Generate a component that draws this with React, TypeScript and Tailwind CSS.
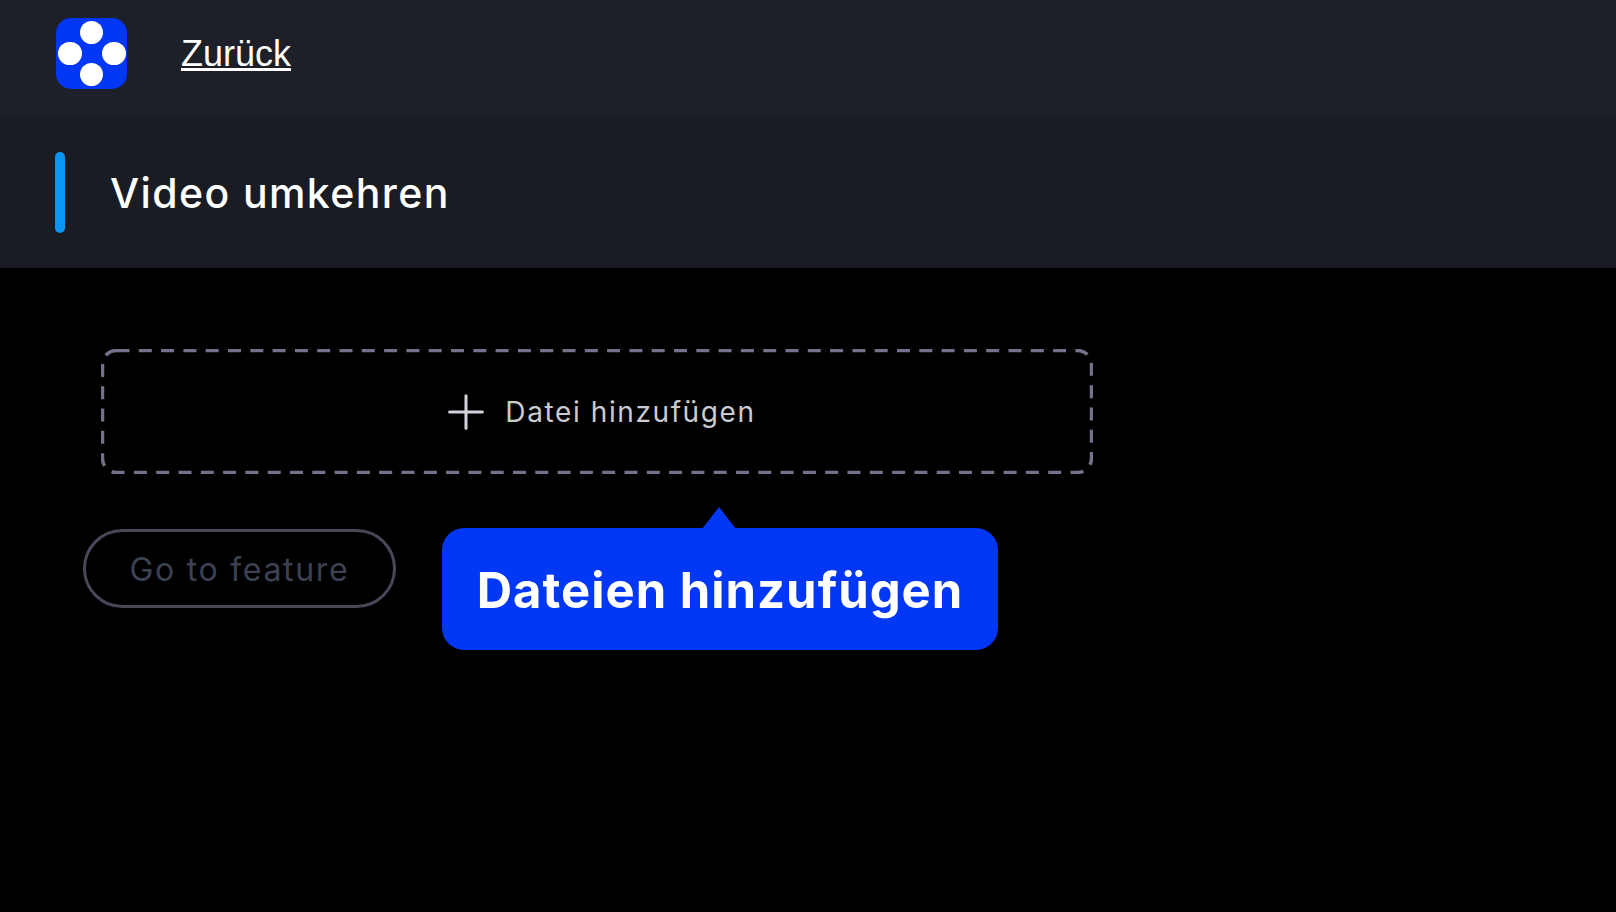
import { Plus } from "lucide-react";

const Logo = () => (
  <div className="relative w-[71px] h-[71px] rounded-[15px] bg-[#0237f5]">
    <span className="absolute left-[24px] top-[3px] w-[23px] h-[23px] rounded-full bg-white" />
    <span className="absolute left-[2px] top-[24px] w-[24px] h-[23px] rounded-full bg-white" />
    <span className="absolute left-[46px] top-[24px] w-[24px] h-[23px] rounded-full bg-white" />
    <span className="absolute left-[24px] top-[45px] w-[23px] h-[23px] rounded-full bg-white" />
  </div>
);

const App = () => {
  return (
    <div className="w-full h-[912px] flex flex-col bg-black font-['Inter',sans-serif] overflow-hidden">
      <header className="h-[116px] shrink-0 flex items-start gap-[54px] pl-[56px] pt-[18px] bg-[#1e2029]">
        <Logo />
        <a className="mt-[18px] text-[36px] leading-none text-white underline font-['Liberation_Sans',sans-serif]">Zurück</a>
      </header>

      <div className="h-[152px] shrink-0 flex items-center gap-[45px] pl-[55px] bg-[#1a1c24]">
        <div className="w-[10px] h-[81px] rounded-full bg-[#0a96f5]" />
        <h1 className="mt-[2px] text-[41px] leading-none font-medium tracking-[1.4px] text-white">Video umkehren</h1>
      </div>

      <main className="relative flex-1 pl-[101px] pt-[81px]">
        <div className="relative w-[992px] h-[125px] flex items-center justify-center gap-[11px]">
          <svg className="absolute inset-0" width="992" height="125" fill="none">
            <rect x="1.5" y="1.5" width="989" height="122" rx="14" stroke="#72738a" strokeWidth="3.5" strokeDasharray="13 9.3" />
          </svg>
          <Plus size={56} strokeWidth={1.3} className="text-[#d2d3da]" />
          <span className="text-[28px] leading-none tracking-[1.6px] text-[#c9cad2]">Datei hinzufügen</span>
        </div>

        <div className="flex mt-[55px] -ml-[18px]">
          <button className="w-[313px] h-[79px] flex items-center justify-center rounded-full border-[3.5px] border-[#464857] text-[32px] tracking-[1.7px] text-[#3c4252]">
            <span className="mt-[2px]">Go to feature</span>
          </button>
        </div>

        <div className="absolute left-[442px] top-[260px] w-[556px] h-[122px] flex items-center justify-center rounded-[22px] bg-[#0237f5]">
          <div className="absolute left-[260px] -top-[21px] w-[34px] h-[22px] bg-[#0237f5] [clip-path:polygon(50%_0,100%_100%,0_100%)]" />
          <span className="mt-[3px] text-[49px] leading-none font-bold tracking-[1px] text-white">Dateien hinzufügen</span>
        </div>
      </main>
    </div>
  );
};

export default App;
